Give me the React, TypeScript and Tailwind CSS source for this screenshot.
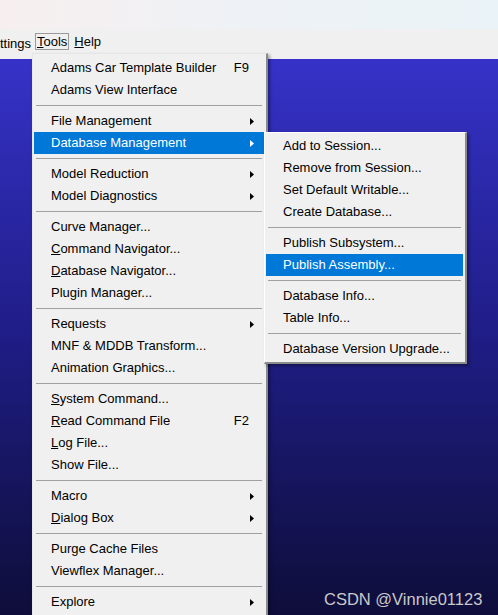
import React from "react";

type Item =
  | { sep: true }
  | { label: React.ReactNode; key?: string; sub?: boolean; active?: boolean; sep?: false };

const u = (ch: string, rest: string) => (
  <>
    <u>{ch}</u>
    {rest}
  </>
);

const toolsMenu: Item[] = [
  { label: "Adams Car Template Builder", key: "F9" },
  { label: "Adams View Interface" },
  { sep: true },
  { label: "File Management", sub: true },
  { label: "Database Management", sub: true, active: true },
  { sep: true },
  { label: "Model Reduction", sub: true },
  { label: "Model Diagnostics", sub: true },
  { sep: true },
  { label: "Curve Manager..." },
  { label: u("C", "ommand Navigator...") },
  { label: u("D", "atabase Navigator...") },
  { label: "Plugin Manager..." },
  { sep: true },
  { label: "Requests", sub: true },
  { label: "MNF & MDDB Transform..." },
  { label: "Animation Graphics..." },
  { sep: true },
  { label: u("S", "ystem Command...") },
  { label: u("R", "ead Command File"), key: "F2" },
  { label: u("L", "og File...") },
  { label: "Show File..." },
  { sep: true },
  { label: "Macro", sub: true },
  { label: u("D", "ialog Box"), sub: true },
  { sep: true },
  { label: "Purge Cache Files" },
  { label: "Viewflex Manager..." },
  { sep: true },
  { label: "Explore", sub: true },
];

const dbMenu: Item[] = [
  { label: "Add to Session..." },
  { label: "Remove from Session..." },
  { label: "Set Default Writable..." },
  { label: "Create Database..." },
  { sep: true },
  { label: "Publish Subsystem..." },
  { label: "Publish Assembly...", active: true },
  { sep: true },
  { label: "Database Info..." },
  { label: "Table Info..." },
  { sep: true },
  { label: "Database Version Upgrade..." },
];

function Arrow({ white }: { white?: boolean }) {
  return (
    <svg width="4" height="7" viewBox="0 0 4 7" className="shrink-0">
      <path d="M0 0 L4 3.5 L0 7 Z" fill={white ? "#fff" : "#000"} />
    </svg>
  );
}

function MenuList({ items }: { items: Item[] }) {
  return (
    <div className="flex flex-col">
      {items.map((it, i) =>
        it.sep ? (
          <div key={i} className="flex h-[9px] items-center px-[2px]">
            <div className="h-px w-full bg-[#a0a0a0]" />
          </div>
        ) : (
          <div
            key={i}
            className={
              "flex h-[22px] items-center pl-[17px] pr-[10px]" +
              (it.active ? " bg-[#0078d7] text-white" : " text-black")
            }
          >
            <span className="flex-1 whitespace-nowrap">{it.label}</span>
            {it.key && <span className="mr-[5px]">{it.key}</span>}
            {it.sub && <Arrow white={it.active} />}
          </div>
        )
      )}
    </div>
  );
}

export default function App() {
  return (
    <div className="relative flex h-[615px] w-[498px] flex-col overflow-hidden font-['Liberation_Sans',Arial,sans-serif] text-[13px]">
      <div className="h-[29px] bg-gradient-to-r from-[#f7efef] via-[#eef2f6] to-[#eaf3f7]" />
      <div className="flex h-[30px] items-start bg-[#f0f0f0] pt-[4px] text-black">
        <span className="w-[35px] py-[1px]">ttings</span>
        <span className="border border-[#9a9a9a] px-[1px] leading-[15px]">
          <u>T</u>ools
        </span>
        <span className="ml-[5px] py-[1px] leading-[15px]">
          <u>H</u>elp
        </span>
      </div>
      <div className="flex-1 bg-gradient-to-b from-[#3632c8] via-[#1f1d86] to-[#0e0d3a]" />

      <div className="absolute left-[32px] top-[53px] w-[236px] border-t border-l border-[#e6e6e6] border-r-2 border-b-2 border-r-[#8a8a8a] border-b-[#8a8a8a] bg-[#f0f0f0] pt-[3px] pb-[2px] pl-[1px] pr-[2px] shadow-[2px_2px_3px_rgba(0,0,0,0.35)]">
        <MenuList items={toolsMenu} />
      </div>

      <div className="absolute left-[264px] top-[132px] w-[203px] border-t border-l border-[#ffffff] border-r-2 border-b-2 border-r-[#8a8a8a] border-b-[#8a8a8a] bg-[#f0f0f0] pt-[2px] pb-[2px] pl-[1px] pr-[2px] shadow-[2px_2px_3px_rgba(0,0,0,0.35)]">
        <MenuList items={dbMenu} />
      </div>

      <div className="absolute left-[324px] top-[587px] text-[16.5px] text-[#c9c9c9]">
        CSDN @Vinnie01123
      </div>
    </div>
  );
}
